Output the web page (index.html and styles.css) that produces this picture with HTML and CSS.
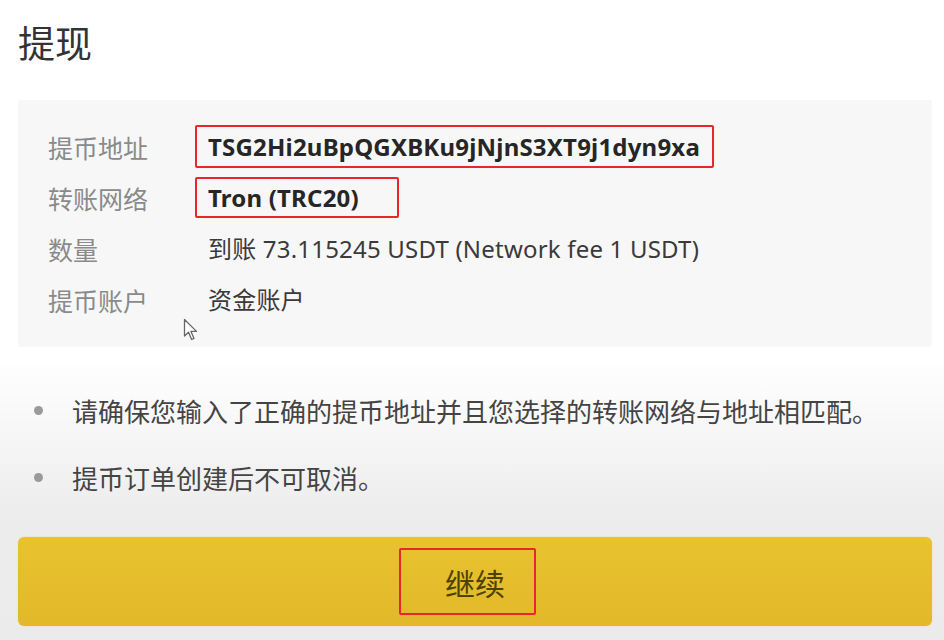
FILE: index.html
```html
<!DOCTYPE html>
<html lang="zh-CN">

<head>
  <meta charset="UTF-8" />
  <meta name="viewport" content="width=device-width, initial-scale=1" />
  <title>提现</title>
  <link rel="stylesheet" href="styles.css">
</head>

<body>
  <h1 class="title">提现</h1>

  <!-- Summary card -->
  <div class="card">
    <div class="row">
      <span class="label">提币地址</span>
      <span class="val strong marked">TSG2Hi2uBpQGXBKu9jNjnS3XT9j1dyn9xa</span>
    </div>
    <div class="row">
      <span class="label">转账网络</span>
      <span class="val strong marked wide">Tron (TRC20)</span>
    </div>
    <div class="row">
      <span class="label">数量</span>
      <span class="val">到账 73.115245 USDT (Network fee 1 USDT)</span>
    </div>
    <div class="row">
      <span class="label">提币账户</span>
      <span class="val">资金账户</span>
    </div>

    <svg class="cursor" width="16" height="24" viewBox="0 0 16 24">
      <path d="M1.5 1.5 L1.5 18 L5.5 14.2 L8.6 21.5 L11 20.4 L8 13.4 L13.5 13.4 Z" fill="#fff" stroke="#666" stroke-width="1.3" stroke-linejoin="round" />
    </svg>
  </div>

  <!-- Notes -->
  <ul class="notes">
    <li>请确保您输入了正确的提币地址并且您选择的转账网络与地址相匹配。</li>
    <li>提币订单创建后不可取消。</li>
  </ul>

  <button class="continue"><span class="marked">继续</span></button>
</body>

</html>
```

FILE: styles.css
```css
body {
  font-family: "Noto Sans", "Noto Sans CJK SC", sans-serif;
  margin: 0;
  padding: 0 12px 0 18px;
  height: 640px;
  box-sizing: border-box;
  overflow: hidden;
  color: #333;
  background: linear-gradient(#fff 0, #fff 360px, #ececec 520px, #ebebeb 640px);
}

.title {
  font-family: "Noto Sans CJK SC", sans-serif;
  font-weight: 400;
  font-size: 37px;
  line-height: 44px;
  margin: 0;
  padding-top: 20px;
  color: #333;
}

.card {
  position: relative;
  margin-top: 36px;
  background: #f7f7f7;
  border-radius: 3px;
  padding: 21px 30px 22px 30px;
}

.row {
  display: flex;
  align-items: center;
  height: 51px;
}

.label {
  font-family: "Noto Sans CJK SC", sans-serif;
  width: 147px;
  font-size: 25px;
  color: #8a8a8a;
}

.val {
  font-size: 24px;
  letter-spacing: 0.2px;
  color: #3a3a3a;
  padding: 0 11px;
  border: 2px solid transparent;
  line-height: 39px;
}

.val.strong {
  font-weight: 700;
  color: #262626;
}

.marked {
  border: 2px solid #e8262b;
  border-radius: 2px;
}

.row .marked {
  padding-right: 12px;
}

.row .marked.wide {
  padding-right: 38px;
  line-height: 37px;
}

.cursor {
  position: absolute;
  left: 165px;
  top: 218px;
}

.notes {
  list-style: none;
  margin: 30px 0 0 0;
  padding: 0;
}

.notes li {
  font-family: "Noto Sans CJK SC", sans-serif;
  font-size: 26px;
  color: #444;
  display: flex;
  align-items: center;
  height: 67px;
}

.notes li::before {
  content: "";
  width: 9px;
  height: 9px;
  border-radius: 50%;
  background: #9a9a9a;
  margin: 0 29px 0 16px;
}

.continue {
  display: flex;
  justify-content: center;
  align-items: center;
  width: 100%;
  height: 89px;
  margin-top: 26px;
  border: none;
  border-radius: 6px;
  background: linear-gradient(#e8c22f, #e1b92a);
  box-shadow: 0 0 2px #f2e08a;
  font-family: "Noto Sans CJK SC", sans-serif;
  font-size: 30px;
  color: #4f4200;
}

.continue .marked {
  width: 137px;
  height: 67px;
  box-sizing: border-box;
  margin-right: 15px;
  padding-left: 15px;
  display: flex;
  justify-content: center;
  align-items: center;
}
```
